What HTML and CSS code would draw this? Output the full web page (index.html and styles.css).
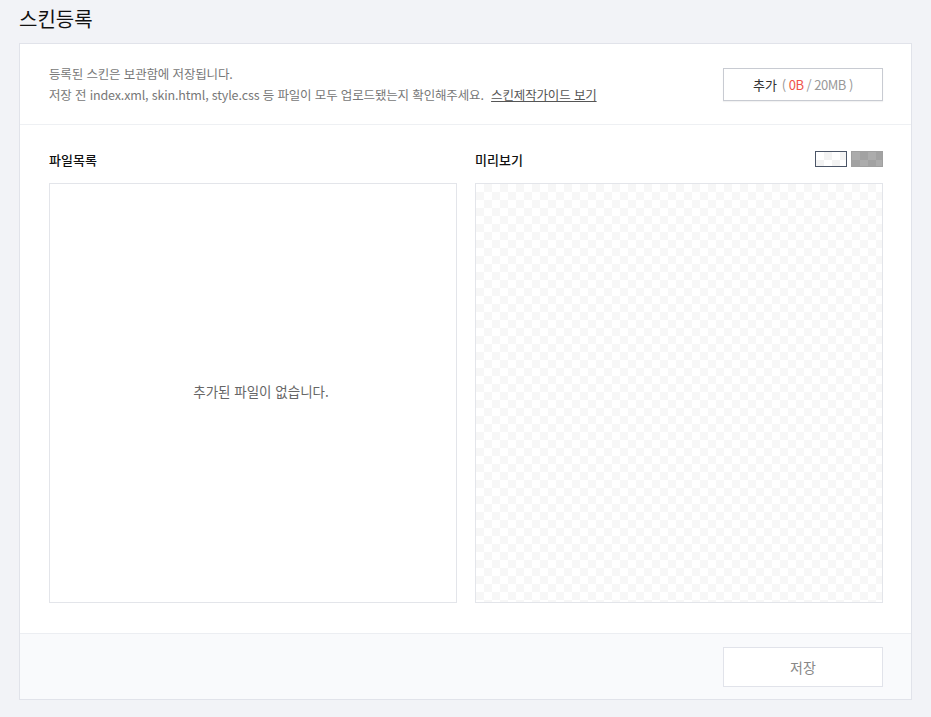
FILE: index.html
```html
<!DOCTYPE html>
<html lang="ko">
<head>
    <meta charset="UTF-8">
    <title>스킨등록</title>
    <meta name="viewport" content="width=device-width, initial-scale=1">
    <link rel="stylesheet" href="styles.css">
</head>
<body>
<div class="page">
    <h1 class="page__title">스킨등록</h1>
    <div class="card">
        <div class="card__top">
            <p class="notice">
                등록된 스킨은 보관함에 저장됩니다.<br>
                저장 전 index.xml, skin.html, style.css 등 파일이 모두 업로드됐는지 확인해주세요. <a href="#" class="notice__link">스킨제작가이드 보기</a>
            </p>
            <button type="button" class="btn btn--add">추가 <span class="size">( <em class="size__used">0B</em> / 20MB )</span></button>
        </div>
        <div class="card__body">
            <div class="panel">
                <div class="panel__head">
                    <h2 class="panel__title">파일목록</h2>
                </div>
                <div class="panel__box panel__box--empty">추가된 파일이 없습니다.</div>
            </div>
            <div class="panel">
                <div class="panel__head">
                    <h2 class="panel__title">미리보기</h2>
                    <div class="bg-switch">
                        <button type="button" class="bg-switch__item bg-switch__item--light is-active"></button>
                        <button type="button" class="bg-switch__item bg-switch__item--dark"></button>
                    </div>
                </div>
                <div class="panel__box panel__box--preview"></div>
            </div>
        </div>
        <div class="card__foot">
            <button type="button" class="btn btn--save">저장</button>
        </div>
    </div>
</div>
</body>
</html>
```

FILE: styles.css
```css
* {
    margin: 0;
    padding: 0;
    box-sizing: border-box;
}

body {
    background: #f2f3f7;
    font-family: "Noto Sans CJK KR", "Noto Sans", sans-serif;
    color: #222;
}

.page {
    padding: 3px 19px 0;
}

.page__title {
    font-size: 20px;
    font-weight: 400;
    line-height: 32px;
    color: #111;
    margin-bottom: 8px;
}

.card {
    background: #fff;
    border: 1px solid #e1e3ea;
}

/*top*/

.card__top {
    height: 81px;
    padding: 0 28px 0 29px;
    border-bottom: 1px solid #eef0f3;
    display: flex;
    align-items: center;
    justify-content: space-between;
}

.notice {
    font-size: 12.5px;
    line-height: 21px;
    color: #777;
    letter-spacing: -0.15px;
}

.notice__link {
    color: #555;
    text-decoration: underline;
    margin-left: 4px;
}

.btn {
    width: 160px;
    background: #fff;
    font-family: inherit;
    font-size: 13px;
    cursor: pointer;
}

.btn--add {
    height: 33px;
    border: 1px solid #c8cbd2;
    box-shadow: 0 1px 1px rgba(0, 0, 0, 0.05);
    color: #333;
}

.size {
    color: #999;
    margin-left: 1px;
    letter-spacing: -0.5px;
}

.size__used {
    font-style: normal;
    color: #f0534a;
}

/*body*/

.card__body {
    display: flex;
    gap: 18px;
    padding: 22px 28px 30px 29px;
}

.panel {
    flex: 1;
}

.panel__head {
    height: 24px;
    margin-bottom: 12px;
    display: flex;
    align-items: center;
    justify-content: space-between;
}

.panel__title {
    font-size: 13px;
    font-weight: 500;
    color: #111;
}

.panel__box {
    height: 420px;
    border: 1px solid #e3e5ea;
}

.panel__box--empty {
    display: flex;
    align-items: center;
    justify-content: center;
    font-size: 13.5px;
    color: #666;
    padding: 0 0 5px 16px;
}

.panel__box--preview {
    background-color: #fff;
    background-image:
        linear-gradient(45deg, #f7f7f7 25%, transparent 25%, transparent 75%, #f7f7f7 75%),
        linear-gradient(45deg, #f7f7f7 25%, transparent 25%, transparent 75%, #f7f7f7 75%);
    background-size: 16px 16px;
    background-position: 0 0, 8px 8px;
}

.bg-switch {
    display: flex;
    gap: 4px;
}

.bg-switch__item {
    width: 32px;
    height: 16px;
    border: 1px solid #999;
    background-size: 16px 16px;
    background-position: 0 0, 8px 8px;
    cursor: pointer;
}

.bg-switch__item--light {
    background-color: #fff;
    background-image:
        linear-gradient(45deg, #f3f3f3 25%, transparent 25%, transparent 75%, #f3f3f3 75%),
        linear-gradient(45deg, #f3f3f3 25%, transparent 25%, transparent 75%, #f3f3f3 75%);
}

.bg-switch__item--dark {
    background-color: #acacac;
    background-image:
        linear-gradient(45deg, #a2a2a2 25%, transparent 25%, transparent 75%, #a2a2a2 75%),
        linear-gradient(45deg, #a2a2a2 25%, transparent 25%, transparent 75%, #a2a2a2 75%);
    border-color: #a0a0a0;
}

.bg-switch__item.is-active {
    border-color: #4b5567;
}

/*footer*/

.card__foot {
    height: 66px;
    background: #f9fafc;
    border-top: 1px solid #eceef2;
    display: flex;
    align-items: center;
    justify-content: flex-end;
    padding: 0 28px;
}

.btn--save {
    height: 40px;
    border: 1px solid #e1e3ea;
    color: #888;
    font-size: 14px;
}
```
